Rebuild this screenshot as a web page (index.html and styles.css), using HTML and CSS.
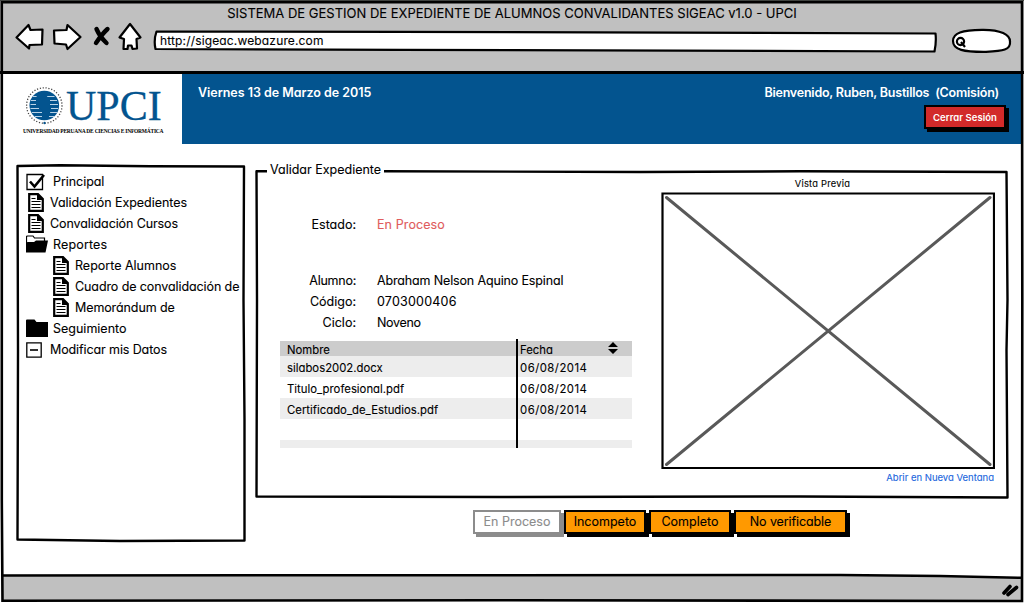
FILE: index.html
```html
<!DOCTYPE html>
<html lang="es">
<head>
<meta charset="utf-8">
<title>SIGEAC v1.0 - UPCI</title>
<link rel="stylesheet" href="styles.css">
</head>
<body>
<svg class="defs" width="0" height="0" aria-hidden="true">
  <symbol id="doc" viewBox="0 0 16 19">
    <path d="M1.200 1.200H10L14.800 6V17.800H1.200Z" fill="#fff" stroke="#000" stroke-width="2.200"/>
    <path d="M9 1V7H15Z" fill="#000"/>
    <path d="M3.500 5.500H7.500M3.500 8.500H12.500M3.500 11.500H12.500M3.500 14.500H12.500" stroke="#000" stroke-width="1.200" fill="none"/>
  </symbol>
</svg>
<div class="window">
  <header class="toolbar">
    <div class="title">SISTEMA DE GESTION DE EXPEDIENTE DE ALUMNOS CONVALIDANTES SIGEAC v1.0 - UPCI</div>
    <div class="nav">
      <svg class="nav-icons" width="128" height="34" viewBox="14 22 128 34">
        <g fill="#fff" stroke="#000" stroke-width="2.200" stroke-linejoin="round">
          <path d="M16.500 37.500L28.500 25L30.500 30L42.500 29.500L42 44.500L29.500 45L29 48.500Z"/>
          <path d="M54 30.500L66.500 30L67.500 25L80.500 37L67.500 49L66 44.500L54.500 43.500Z"/>
          <path d="M130 24L119.500 37.500L124 39L123.500 49L127.500 49L128 45.500H131.500L132.500 49L137 48.500L136.500 39L140.500 37.500Z"/>
        </g>
        <path d="M96.500 29Q100 37 106.500 43M107.500 29Q102 34 96 43" fill="none" stroke="#000" stroke-width="4.400" stroke-linecap="round"/>
      </svg>
      <div class="url">
        <svg class="frame" width="786" height="24" viewBox="152 29 786 24"><path d="M156.500 31.500L400 31.800L935.500 33.500Q936.500 42 934.500 51.500L400 49.800L155.500 49Q153.500 40 156.500 31.500Z" fill="#fff" stroke="#000" stroke-width="2.200" stroke-linejoin="round"/></svg>
        <span>http://sigeac.webazure.com</span>
      </div>
      <svg class="search" width="62" height="28" viewBox="950 27 62 28">
        <path d="M953 41C953 33 962 30 982 29.800C1001 29.500 1010 35 1010 41.500C1011 50 1003 51 986 51.800C964 52 953 50 953 41Z" fill="#fff" stroke="#000" stroke-width="2.200"/>
        <circle cx="960.500" cy="41.500" r="3.600" fill="#fff" stroke="#000" stroke-width="2.200"/>
        <path d="M961 42L965 47" stroke="#000" stroke-width="2.200"/>
      </svg>
    </div>
  </header>

  <section class="banner">
    <div class="logo">
      <div class="brand">
        <svg width="42" height="42" viewBox="24 84 42 42">
          <circle cx="44.300" cy="105.500" r="17.700" fill="none" stroke="#444" stroke-width="1.300" stroke-dasharray="1.200 1.700"/>
          <circle cx="44.300" cy="105.500" r="14.800" fill="#03548f"/>
          <path d="M33 96.500H40M45 96.500H54.500M31 100.500H36M50 100.500H57M30.500 104.500H36M50 104.500H58M30.500 108.500H39M51 108.500H58M32 112.500H42M50 112.500H57M35 116.500H42M49 116.500H54" stroke="#b9d2e6" stroke-width="1"/>
          <path d="M38 93L46 95L50 100L49 106L51 111L46 119L43 116L43 111L37 105L36 98Z" fill="#03548f"/>
          <circle cx="44.500" cy="123" r="1.200" fill="#03548f"/>
        </svg>
        <span class="upci">UPCI</span>
      </div>
      <div class="tagline">UNIVERSIDAD PERUANA DE CIENCIAS E INFORMÁTICA</div>
    </div>
    <div class="strip">
      <div class="date">Viernes 13 de Marzo de 2015</div>
      <div class="user">
        <div class="hello">Bienvenido, Ruben, Bustillos&nbsp; (Comisión)</div>
        <button class="btn logout">Cerrar Sesión</button>
      </div>
    </div>
  </section>

  <main class="body">
    <nav class="side">
      <svg class="frame" width="232" height="380" viewBox="15 163 232 380"><path d="M17.500 166L60 165.300L150 166.200L244 166.500L243.500 300L244.500 420L244.500 540.500L120 541L17.500 539.500L18 350Z" fill="#fff" stroke="#000" stroke-width="2.400" stroke-linejoin="round"/></svg>
      <ul>
        <li class="check"><svg width="21" height="19" viewBox="0 0 21 19"><path d="M1 2.500H16.500V17.500H1Z" fill="#fff" stroke="#000" stroke-width="1.300"/><path d="M4 9.500L8.500 14.500L18 3" fill="none" stroke="#000" stroke-width="2.600"/></svg><span>Principal</span></li>
        <li class="doc"><svg width="16" height="19"><use href="#doc"/></svg><span>Validación Expedientes</span></li>
        <li class="doc conv"><svg width="16" height="19"><use href="#doc"/></svg><span>Convalidación Cursos</span></li>
        <li class="folder"><svg width="22" height="18" viewBox="0 0 22 18"><path d="M.5 16V2Q.5 1 1.500 1H7L8.500 3H18.500V6" fill="#fff" stroke="#000" stroke-width="1.200"/><path d="M0 17.500V8L1.500 7H8L10 5.500H22L19.500 17.500Z"/></svg><span class="rep">Reportes</span></li>
        <li class="sub"><svg width="16" height="19"><use href="#doc"/></svg><span>Reporte Alumnos</span></li>
        <li class="sub conv2"><svg width="16" height="19"><use href="#doc"/></svg><span>Cuadro de convalidación de</span></li>
        <li class="sub conv2"><svg width="16" height="19"><use href="#doc"/></svg><span>Memorándum de</span></li>
        <li class="folder"><svg width="22" height="18" viewBox="0 0 22 18"><path d="M0 1.500Q0 .5 1 .5H8.500L10.500 3H22V18H0Z"/></svg><span>Seguimiento</span></li>
        <li class="minus"><svg width="16" height="16" viewBox="0 0 16 16"><path d="M.8 .8H15.200V15.200H.8Z" fill="#fff" stroke="#000" stroke-width="1.300"/><path d="M4 8H12" stroke="#000" stroke-width="1.600"/></svg><span>Modificar mis Datos</span></li>
      </ul>
    </nav>

    <div class="content">
      <section class="panel">
        <svg class="frame" width="756" height="332" viewBox="254 168 756 332"><path d="M267 171.300H256.500L257 300L256.500 496.500L500 497L800 496.500L1007.500 497.500L1006.500 350L1007.500 300L1006.500 172L800 171.300L640 172L384 171.300" fill="none" stroke="#000" stroke-width="2.400" stroke-linejoin="round"/></svg>
        <h1 class="legend">Validar Expediente</h1>
        <div class="cols">
          <div class="left">
            <dl>
              <div class="state"><dt>Estado:</dt><dd>En Proceso</dd></div>
              <div><dt class="al">Alumno:</dt><dd class="name">Abraham Nelson Aquino Espinal</dd></div>
              <div><dt>Código:</dt><dd class="code">0703000406</dd></div>
              <div><dt>Ciclo:</dt><dd class="cycle">Noveno</dd></div>
            </dl>
            <div class="table">
              <svg class="divider" width="3" height="109" viewBox="0 0 3 109"><path d="M1 0V109" stroke="#000" stroke-width="2"/></svg>
              <div class="tr th"><span>Nombre</span><span>Fecha</span><svg width="10" height="12" viewBox="0 0 10 12"><path d="M5 0L10 5H0ZM0 7H10L5 12Z"/></svg></div>
              <div class="tr alt"><span>silabos2002.docx</span><span class="d">06/08/2014</span></div>
              <div class="tr"><span>Titulo_profesional.pdf</span><span class="d">06/08/2014</span></div>
              <div class="tr alt"><span>Certificado_de_Estudios.pdf</span><span class="d">06/08/2014</span></div>
              <div class="tr"></div>
              <div class="tr alt last"></div>
            </div>
          </div>
          <div class="preview">
            <div class="caption">Vista Previa</div>
            <svg width="334" height="277" viewBox="661 192 334 277"><path d="M662.500 193.500H994V468H662.500Z" fill="#fff" stroke="#000" stroke-width="2.200"/><path d="M666.500 197.500L990 464.500M990 197.500L666.500 464.500" stroke="#595959" stroke-width="3" stroke-linecap="round"/></svg>
            <a>Abrir en Nueva Ventana</a>
          </div>
        </div>
      </section>
      <div class="actions">
        <button class="btn off">En Proceso</button>
        <button class="btn inc">Incompeto</button>
        <button class="btn com">Completo</button>
        <button class="btn nov">No verificable</button>
      </div>
    </div>
  </main>

  <footer class="status">
    <svg width="1024" height="32" viewBox="0 571 1024 32"><path d="M3 575.500L840 575L940 575.500L1021 577.500V601H3Z" fill="#c0c0c0"/><path d="M3 575.500L840 575L940 576L1021 577.800" fill="none" stroke="#000" stroke-width="2.500"/><path d="M1004 593L1010 586.500M1008 594.500L1016.500 587.500" stroke="#000" stroke-width="3.600" stroke-linecap="round"/></svg>
  </footer>

  <svg class="outline" width="1024" height="603" viewBox="0 0 1024 603"><path d="M0 .5H1024" stroke="#3f423f" stroke-width="1"/><path d="M1.800 2.200H1022L1022.300 300L1022 601L500 600.200L2.500 600.800L1.800 500V100Z" fill="none" stroke="#000" stroke-width="2.600"/></svg>
</div>
</body>
</html>
```
FILE: styles.css
```css
* { box-sizing: border-box; margin: 0; padding: 0; }
body {
  width: 1024px; height: 603px; overflow: hidden; background: #fff; color: #000;
  font: 430 12.5px/21px Inter, "Liberation Sans", sans-serif;
  font-feature-settings: "cv11" 1;
  -webkit-text-stroke: .1px;
}
svg { display: block; flex: none; }
.defs { position: absolute; }
.window { position: relative; width: 1024px; height: 603px; display: flex; flex-direction: column; }
.outline { position: absolute; inset: 0; pointer-events: none; }
.frame { position: absolute; z-index: 0; }

/* browser chrome */
.toolbar { height: 74px; background: #c0c0c0; border-bottom: 3px solid #000; padding-top: 3px; flex: none; }
.title { text-align: center; font-size: 13px; line-height: 21px; height: 19px; }
.nav { display: flex; padding-left: 14px; align-items: flex-start; }
.url { position: relative; width: 784px; height: 24px; margin: 7px 14px 0 10px; }
.url .frame { left: 0; top: 0; }
.url span { position: relative; display: block; padding-left: 8px; font-size: 12px; line-height: 23px; letter-spacing: .15px; }
.search { margin-top: 5px; }

/* banner */
.banner { display: flex; height: 70px; flex: none; padding: 0 3px 0 3px; }
.logo { width: 179px; padding: 10px 0 0 21px; }
.brand { display: flex; height: 42px; }
.upci { font: 42px/42px "Liberation Serif", serif; color: #03548f; -webkit-text-stroke: .3px; padding-top: 1px; }
.tagline { font: bold 5.500px/8px "Liberation Serif", serif; letter-spacing: -.24px; white-space: nowrap; -webkit-text-stroke: 0; margin: 1px 0 0 -1px; }
.strip { flex: 1; background: #03548f; color: #fff; display: flex; justify-content: space-between; padding: 8px 12px 0 16px; font-weight: 600; }
.strip > div { -webkit-text-stroke: 0; }
.date { letter-spacing: -.03px; }
.user { display: flex; flex-direction: column; align-items: flex-end; }
.hello { padding-right: 10px; letter-spacing: -.22px; }
.btn { font: inherit; font-feature-settings: inherit; color: #000; border: 2px solid #000; background: #ff9900; box-shadow: 3px 3px 0 #000; height: 24px; line-height: 19px; text-align: center; white-space: nowrap; }
.logout { width: 82px; height: 24px; line-height: 21px; background: #d22a2a; color: #fff; font-size: 9.500px; font-weight: 600; letter-spacing: .05px; margin: 2px 3px 0 0; }

/* body */
.body { display: flex; padding: 21px 0 0 17px; flex: 1; }
.side { position: relative; width: 228px; height: 376px; }
.side .frame { left: -2px; top: -2px; }
.side ul { position: relative; list-style: none; padding: 6px 0 0 9px; }
.side li { display: flex; align-items: center; height: 21px; white-space: nowrap; }
.side li svg { margin-top: -1px; }
.side li span { margin-left: 6px; }
.side .check span { letter-spacing: -.05px; }
.side .doc { padding-left: 2px; }
.side .doc span { letter-spacing: -.05px; }
.side .conv span, .side .minus span { letter-spacing: -.11px; }
.side .folder span { margin-left: 5px; }
.side .folder .rep { letter-spacing: .15px; }
.side .sub { padding-left: 27px; }
.side .conv2 span { letter-spacing: -.1px; }
.side .minus span { margin-left: 8px; }
.side .minus svg { margin-top: 0; }
.content { padding-left: 11px; width: 763px; }
.panel { position: relative; height: 333px; }
.panel .frame { left: -2px; top: 3px; }
.legend { position: relative; font-size: 12.500px; font-weight: inherit; line-height: 10px; padding-left: 14px; }
.cols { position: relative; display: flex; padding-left: 24px; }
.left { width: 352px; margin-right: 29px; padding-top: 39px; }
dl > div { display: flex; height: 21px; }
dt { width: 76px; text-align: right; margin-right: 21px; }
.al { letter-spacing: -.25px; }
dl .state { height: 56px; }
.state dd { color: #e05c5c; letter-spacing: .1px; }
.name { letter-spacing: -.15px; }
.code { letter-spacing: .22px; }
.cycle { letter-spacing: -.33px; }
.table { position: relative; margin-top: 8px; font-size: 11.300px; letter-spacing: .02px; }
.divider { position: absolute; left: 236px; top: -2px; z-index: 1; }
.tr { display: grid; grid-template-columns: 233px 84px 1fr; padding-left: 7px; height: 21px; line-height: 24px; }
.tr.th { height: 15px; line-height: 18px; background: #ccc; }
.th svg { margin: 1px 0 0 4px; }
.alt { background: #ededed; }
.last { height: 8px; }
.d { letter-spacing: .5px; }
.preview { width: 334px; }
.caption { text-align: center; font-size: 9.300px; line-height: 11px; height: 17px; padding: 3px 11px 0 0; letter-spacing: .25px; }
.preview a { display: block; text-align: right; color: #1a66dd; font-size: 9.500px; line-height: 13px; padding: 2px 1px 0 0; }
.actions { display: flex; gap: 4px; padding: 12px 0 0 217px; }
.actions .btn { width: 82px; margin-left: -1px; line-height: 17px; padding-bottom: 2px; }
.actions .off { width: 88px; margin-left: 0; color: #8c8c8c; background: #fff; border-color: #8c8c8c; box-shadow: 3px 3px 0 #8c8c8c; }
.actions .nov { width: 113px; letter-spacing: -.1px; }
.status { height: 32px; flex: none; }
```
